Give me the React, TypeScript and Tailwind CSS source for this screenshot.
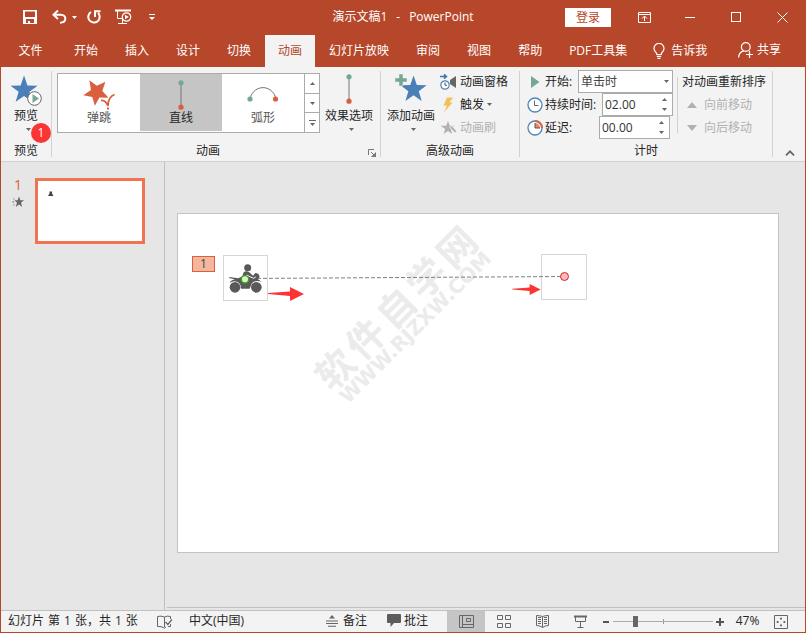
import clsx from 'clsx';
import React from 'react';

const STAR = '12,0.5 14.9,8.9 23.6,9.1 16.6,14.4 19.2,22.9 12,17.9 4.8,22.9 7.4,14.4 0.4,9.1 9.1,8.9';

const tabs = ['开始', '插入', '设计', '切换', '动画', '幻灯片放映', '审阅', '视图', '帮助', 'PDF工具集'];

const Caret: React.FC<{ up?: boolean; className?: string }> = ({ up, className }) => (
    <svg viewBox="0 0 5 3" className={clsx('h-[3px] w-[5px] shrink-0', className)} fill="currentColor">
        <path d={up ? 'M0 3 L2.5 0 L5 3Z' : 'M0 0 H5 L2.5 3Z'} />
    </svg>
);

const Group: React.FC<{ label: string; className?: string; labelClass?: string; launcher?: boolean; children: React.ReactNode }> = ({
    label,
    className,
    labelClass,
    launcher,
    children,
}) => (
    <section aria-label={label} className={clsx('relative flex shrink-0 flex-col border-r border-[#d2d2d2]', className)}>
        <div className="flex flex-1">{children}</div>
        <div className={clsx('text-center leading-3', labelClass)}>{label}</div>
        {launcher && (
            <button aria-label="更多选项" className="absolute right-[4px] bottom-0 h-2 w-2 text-[#777]">
                <svg viewBox="0 0 8 8" className="h-2 w-2" fill="none" stroke="currentColor">
                    <path d="M0.5 6 V0.5 H6 M3 3 L6.5 6.5 M7.5 3.5 V7.5 H3.5" />
                    <path d="M4 7.5 H7.5 V4Z" fill="currentColor" />
                </svg>
            </button>
        )}
    </section>
);

const BigButton: React.FC<{ label: string; className?: string; children: React.ReactNode }> = ({ label, className, children }) => (
    <button className={clsx('flex flex-col items-center pt-[3px]', className)}>
        {children}
        <span className="mt-[2px] leading-4 whitespace-nowrap">{label}</span>
        <Caret className="mt-1 ml-1 text-[#666]" />
    </button>
);

const LineIcon = () => (
    <svg viewBox="0 0 8 30" className="h-[30px] w-2">
        <path d="M4 3 V27" stroke="#777" />
        <circle cx="4" cy="2.8" r="2.6" fill="#74a893" />
        <circle cx="4" cy="27.2" r="2.6" fill="#d9603e" />
    </svg>
);

const BounceIcon = () => (
    <svg viewBox="0 0 32 31" className="h-[31px] w-8">
        <polygon
            points="6.3,1.2 13.9,6.8 22.4,2.8 19.3,12 25.6,18.8 16.4,18.6 11.9,26.8 9.3,18 0.3,16.2 8,11"
            fill="#d9603e"
        />
        <path d="M18 21.5 Q22.5 21 25 27 Q25 18 31.5 15.5" fill="none" stroke="#fff" strokeWidth="4" />
        <path d="M18 21.5 Q22.5 21 25 27 Q25 18 31.5 15.5" fill="none" stroke="#d9603e" strokeWidth="1.8" />
        <path d="M24 28.5 H26 V30.5 H24Z" fill="#d9603e" />
    </svg>
);

const ArcIcon = () => (
    <svg viewBox="0 0 32 16" className="h-4 w-8">
        <path d="M3 12.5 C7 -2 25 -2 29 12.5" fill="none" stroke="#777" />
        <circle cx="3" cy="13" r="2.6" fill="#74a893" />
        <circle cx="28.5" cy="13" r="2.6" fill="#d9603e" />
    </svg>
);

const effects = [
    { name: '弹跳', icon: <BounceIcon />, active: false },
    { name: '直线', icon: <LineIcon />, active: true },
    { name: '弧形', icon: <ArcIcon />, active: false },
];

const ClockIcon: React.FC<{ delay?: boolean }> = ({ delay }) => (
    <svg viewBox="0 0 16 16" className="h-4 w-4 shrink-0" fill="none">
        <circle cx="8" cy="8" r="7" fill="#fff" stroke="#4f86b8" strokeWidth="1.3" />
        {delay ? (
            <>
                <path d="M8 8 V3 A5 5 0 0 1 13 8Z" fill="#e88872" />
                <path d="M8 1 A7 7 0 0 1 15 8" stroke="#d9603e" strokeWidth="2" />
                <path d="M8 3 V8 H13" stroke="#555" />
            </>
        ) : (
            <path d="M7.5 3.5 V8.5 H11.5" stroke="#666" />
        )}
    </svg>
);

const Spinner: React.FC<{ id: string; value: string }> = ({ id, value }) => (
    <div className="flex h-[23px] w-[71px] border border-[#ababab] bg-white">
        <input id={id} defaultValue={value} className="w-0 flex-1 pl-[2px] text-[#333] outline-none" />
        <div className="flex w-4 flex-col text-[#666]">
            <button aria-label="增加" className="flex flex-1 items-center justify-center">
                <Caret up />
            </button>
            <button aria-label="减少" className="flex flex-1 items-center justify-center">
                <Caret />
            </button>
        </div>
    </div>
);

const TitleBar = () => (
    <header className="grid h-[33px] grid-cols-[1fr_auto_1fr] items-center pb-px text-white">
        <div className="flex items-center pl-[22px]">
            <button aria-label="保存">
                <svg viewBox="0 0 14 14" className="h-[14px] w-[14px]">
                    <path d="M0 0 H14 V14 H0Z M2 1.5 V7 H12 V1.5Z M3 9 V13 H5 V11 H7 V13 H11 V9Z" fill="currentColor" fillRule="evenodd" />
                </svg>
            </button>
            <button aria-label="撤消" className="ml-[15px]">
                <svg viewBox="0 0 15 14" className="h-[14px] w-[15px]" fill="none" stroke="currentColor" strokeWidth="2">
                    <path d="M6 0.5 L1.5 4.7 L6 9" />
                    <path d="M2 4.7 H8.5 C15 5 15 12.5 8 12.8" />
                </svg>
            </button>
            <Caret className="ml-[5px]" />
            <button aria-label="重复" className="ml-[10px]">
                <svg viewBox="0 0 14 14" className="h-[14px] w-[14px]" fill="none" stroke="currentColor" strokeWidth="2">
                    <path d="M4 2 A5.7 5.7 0 1 0 11 2.8" />
                    <path d="M8 7 V1.2 H13.5" />
                </svg>
            </button>
            <button aria-label="从头开始" className="ml-[14px]">
                <svg viewBox="0 0 17 16" className="h-4 w-[17px]" fill="none" stroke="currentColor">
                    <path d="M0 1.5 H16" strokeWidth="2" />
                    <path d="M2.5 2 V9.5 H7 M7.5 10 V14.5 M3 14.5 H12" />
                    <circle cx="11.5" cy="8" r="4.2" fill="#b7472a" strokeWidth="1.2" />
                    <path d="M10 5.7 V10.3 L13.8 8Z" fill="currentColor" stroke="none" />
                </svg>
            </button>
            <button aria-label="自定义快速访问工具栏" className="ml-[17px]">
                <svg viewBox="0 0 6 6" className="h-[6px] w-[6px]" fill="currentColor">
                    <path d="M0 0 H6 V1 H0Z M0 3 H6 L3 6Z" />
                </svg>
            </button>
        </div>
        <h1 className="flex gap-[9px]">
            <span>演示文稿1</span>
            <span>-</span>
            <span>PowerPoint</span>
        </h1>
        <div className="flex items-center justify-end">
            <button className="mr-[10px] h-[19px] w-[46px] bg-white leading-[19px] text-[#b7472a]">登录</button>
            <button aria-label="功能区显示选项" className="flex w-[46px] justify-center">
                <svg viewBox="0 0 13 11" className="h-[11px] w-[13px]" fill="none" stroke="currentColor">
                    <path d="M0.5 0.5 H12.5 V10.5 H0.5Z M0.5 2.5 H12.5 M6.5 9 V4.5 M4 6.5 L6.5 4 L9 6.5" />
                </svg>
            </button>
            <button aria-label="最小化" className="flex w-[46px] justify-center">
                <span className="h-px w-[10px] bg-white" />
            </button>
            <button aria-label="最大化" className="flex w-[46px] justify-center">
                <span className="h-[10px] w-[10px] border border-white" />
            </button>
            <button aria-label="关闭" className="flex w-[46px] justify-center">
                <svg viewBox="0 0 11 11" className="h-[11px] w-[11px]" stroke="currentColor">
                    <path d="M0.5 0.5 L10.5 10.5 M10.5 0.5 L0.5 10.5" />
                </svg>
            </button>
        </div>
    </header>
);

const TabBar = () => (
    <nav className="flex h-[33px] items-end gap-px whitespace-nowrap text-white">
        <button className="h-8 w-[59px]">文件</button>
        {tabs.map((tab) => (
            <button key={tab} className={clsx('h-8 px-[13px]', tab === '动画' && 'bg-[#f3f3f3] text-[#b7472a]')}>
                {tab}
            </button>
        ))}
        <button className="ml-3 flex h-8 items-center gap-[6px]">
            <svg viewBox="0 0 12 16" className="h-4 w-3" fill="none" stroke="currentColor" strokeWidth="1.2">
                <path d="M3.8 11.5 C3.8 9 1 8.5 1 5.4 A5 5 0 0 1 11 5.4 C11 8.5 8.2 9 8.2 11.5Z M3.8 13.4 H8.2 M4.5 15.3 H7.5" />
            </svg>
            告诉我
        </button>
        <button className="mr-6 ml-auto flex h-8 items-center gap-1 pb-[2px]">
            <svg viewBox="0 0 15 16" className="h-4 w-[15px]" fill="none" stroke="currentColor" strokeWidth="1.2">
                <circle cx="7.8" cy="5" r="4.4" />
                <path d="M0.6 15.5 C0.8 11.5 3 9.3 6 8.8 M11.5 9 V16 M8 12.5 H15" />
            </svg>
            共享
        </button>
    </nav>
);

const Ribbon = () => (
    <div className="flex h-[95px] border-b border-[#d0d0d0] bg-[#f3f3f3] py-1 text-[#262626]">
        <Group label="预览" className="w-[51px]">
            <BigButton label="预览" className="w-full">
                <svg viewBox="0 0 32 32" className="h-8 w-8">
                    <g transform="translate(0 1) scale(1.17)">
                        <polygon points={STAR} fill="#4a7fb8" />
                    </g>
                    <circle cx="24.5" cy="24.5" r="6.8" fill="#fff" stroke="#666" />
                    <path d="M22.5 20 V29 L29 24.5Z" fill="#74a893" />
                </svg>
            </BigButton>
            <span className="absolute top-[52px] left-[30px] flex h-5 w-5 items-center justify-center rounded-full bg-[#fb3434] text-white">1</span>
        </Group>

        <Group label="动画" className="w-[329px]" labelClass="pr-4" launcher>
            <div className="mt-[2px] ml-[5px] flex h-[60px] border border-[#ababab] bg-white">
                {effects.map((effect) => (
                    <button
                        key={effect.name}
                        className={clsx('mb-px flex w-[82px] flex-col items-center', effect.active ? 'bg-[#c5c5c5]' : 'text-[#555]')}
                    >
                        <span className="flex h-9 items-end justify-center">
                            <span className={effect.name === '弧形' ? 'pb-2' : ''}>{effect.icon}</span>
                        </span>
                        <span className="leading-4">{effect.name}</span>
                    </button>
                ))}
                <div className="flex w-[15px] flex-col divide-y divide-[#ababab] border-l border-[#ababab] text-[#666]">
                    <button aria-label="上一行" className="flex flex-1 items-center justify-center">
                        <Caret up />
                    </button>
                    <button aria-label="下一行" className="flex flex-1 items-center justify-center">
                        <Caret />
                    </button>
                    <button aria-label="其他" className="flex flex-1 flex-col items-center justify-center gap-[2px]">
                        <span className="h-px w-[7px] bg-[#666]" />
                        <Caret />
                    </button>
                </div>
            </div>
            <BigButton label="效果选项" className="w-[58px]">
                <span className="flex h-8 items-start">
                    <LineIcon />
                </span>
            </BigButton>
        </Group>

        <Group label="高级动画" className="w-[139px]">
            <BigButton label="添加动画" className="ml-[5px] w-[50px]">
                <svg viewBox="0 0 32 32" className="h-8 w-8">
                    <g transform="translate(5 1) scale(1.13)">
                        <polygon points={STAR} fill="#4a7fb8" />
                    </g>
                    <path d="M4 0 H8 V4 H12 V8 H8 V12 H4 V8 H0 V4 H4Z" fill="#74a893" stroke="#f3f3f3" strokeWidth="0.5" />
                </svg>
            </BigButton>
            <div className="-mt-px ml-1 flex flex-col whitespace-nowrap">
                <button className="flex h-[23px] items-center gap-[3px]">
                    <svg viewBox="0 0 17 16" className="h-4 w-[17px]" fill="none">
                        <path d="M0 2.5 H6 M4 0.3 L6.4 2.5 L4 4.7" stroke="#4177ad" strokeWidth="1.6" />
                        <circle cx="5" cy="11" r="4.2" fill="#fff" stroke="#4f86b8" strokeWidth="1.2" />
                        <path d="M5 8.5 V11.3 H7" stroke="#555" />
                        <path d="M10 6 L16 2 V14 L10 10Z" fill="#666" />
                    </svg>
                    动画窗格
                </button>
                <button className="flex h-[23px] items-center gap-[3px]">
                    <svg viewBox="0 0 17 16" className="h-4 w-[17px]">
                        <path d="M7 0.5 H13 L9.5 5.5 H12.5 L4 15.5 L7 8.5 H3.5Z" fill="#f0c05a" />
                    </svg>
                    触发
                    <Caret className="text-[#666]" />
                </button>
                <button disabled className="flex h-[23px] items-center gap-[3px] text-[#b1b1b1]">
                    <svg viewBox="0 0 17 16" className="h-4 w-[17px]" fill="currentColor">
                        <path d="M8 1 L9.8 5.8 H14.5 L10.8 8.8 L12 14 L8 11 L3.5 14 L5.2 9 L0.5 5.8 H6.2Z" />
                        <path d="M9.5 7.5 L12 6 L16.8 11.2 L15.2 13Z" stroke="#f3f3f3" strokeWidth="0.8" />
                    </svg>
                    动画刷
                </button>
            </div>
        </Group>

        <Group label="计时" className="w-[253px]">
            <div className="-mt-px ml-[7px] flex w-[146px] flex-col whitespace-nowrap">
                <div className="flex h-[23px] items-center">
                    <svg viewBox="0 0 16 16" className="h-4 w-4">
                        <path d="M4 2 V14 L12.5 8Z" fill="#74a893" />
                    </svg>
                    <label htmlFor="start" className="ml-[2px]">
                        开始:
                    </label>
                    <div className="relative ml-auto">
                        <select
                            id="start"
                            defaultValue="单击时"
                            className="block h-[23px] w-[95px] appearance-none border border-[#ababab] bg-white pl-[2px] text-[#444] outline-none"
                        >
                            <option>单击时</option>
                            <option>与上一动画同时</option>
                            <option>上一动画之后</option>
                        </select>
                        <Caret className="pointer-events-none absolute top-[10px] right-1 text-[#666]" />
                    </div>
                </div>
                <div className="flex h-[23px] items-center">
                    <ClockIcon />
                    <label htmlFor="duration" className="mr-auto ml-[2px]">
                        持续时间:
                    </label>
                    <Spinner id="duration" value="02.00" />
                </div>
                <div className="flex h-[23px] items-center pr-[3px]">
                    <ClockIcon delay />
                    <label htmlFor="delay" className="mr-auto ml-[2px]">
                        延迟:
                    </label>
                    <Spinner id="delay" value="00.00" />
                </div>
            </div>
            <div className="my-[6px] ml-1 h-14 w-px bg-[#d2d2d2]" />
            <div className="-mt-px ml-1 flex flex-col whitespace-nowrap">
                <div className="h-[23px] leading-[23px]">对动画重新排序</div>
                <button disabled className="flex h-[23px] items-center pl-[5px] text-[#b1b1b1]">
                    <svg viewBox="0 0 10 6" className="mr-[7px] h-[6px] w-[10px]" fill="currentColor">
                        <path d="M0 6 L5 0 L10 6Z" />
                    </svg>
                    向前移动
                </button>
                <button disabled className="flex h-[23px] items-center pl-[5px] text-[#b1b1b1]">
                    <svg viewBox="0 0 10 6" className="mr-[7px] h-[6px] w-[10px]" fill="currentColor">
                        <path d="M0 0 H10 L5 6Z" />
                    </svg>
                    向后移动
                </button>
            </div>
        </Group>

        <button aria-label="折叠功能区" className="mr-[10px] ml-auto self-end pb-px text-[#666]">
            <svg viewBox="0 0 10 6" className="h-[6px] w-[10px]" fill="none" stroke="currentColor" strokeWidth="1.8">
                <path d="M1 5.3 L5 1.3 L9 5.3" />
            </svg>
        </button>
    </div>
);

const Motorbike = () => (
    <svg viewBox="0 0 135 138" className="h-full w-full" fill="#595959">
        <circle cx="36" cy="97" r="16" />
        <circle cx="100" cy="97" r="16" />
        <circle cx="74" cy="38" r="10.5" />
        <path d="M18 66 L46 70 L58 64 L62 52 Q68 46 78 51 L90 62 L97 54 Q108 55 110 65 L105 73 L116 80 Q98 74 87 84 L80 101 H54 Q54 84 42 80 Q30 76 20 84 Q24 75 36 73 L20 70Z" />
        <path d="M70 60 L92 70 L98 66" fill="none" stroke="#fff" strokeWidth="3" />
        <circle cx="66" cy="73" r="11" fill="#d9f7c0" stroke="#3f9f22" strokeWidth="4" />
    </svg>
);

const RedArrow: React.FC<{ className: string }> = ({ className }) => (
    <svg viewBox="0 0 36 14" className={clsx('absolute', className)} fill="#fb3434">
        <path d="M0 6 L22 4.5 V0 L36 7 L22 14 V9 L0 7Z" />
    </svg>
);

const Slide = () => (
    <div className="relative aspect-[602/340] w-full overflow-hidden border border-[#c3c3c3] bg-white">
        <div className="absolute top-[74px] left-[106px] w-60 -rotate-45 font-bold text-[#ebebeb]">
            <div className="flex justify-center gap-[5px] text-[38px] leading-8">
                {[...'软件自学网'].map((char) => (
                    <span key={char}>{char}</span>
                ))}
            </div>
            <div className="text-center font-[family-name:DejaVu_Sans] text-[20px] leading-6">WWW.RJZXW.COM</div>
        </div>
        <div className="absolute top-[42px] left-[14px] h-4 w-[23px] border border-[#d9603e] bg-[#f4b79d] text-center leading-[14px] text-[#444]">1</div>
        <div className="absolute top-[41px] left-[45px] h-[46px] w-[45px] border border-[#d6d6d6]" />
        <div className="absolute top-10 left-[363px] h-[46px] w-[46px] border border-[#d6d6d6]" />
        <svg viewBox="0 0 320 4" className="absolute top-[61px] left-[67px] h-1 w-80">
            <path d="M0 3.5 L320 1.5" stroke="#808080" strokeDasharray="4 2" />
        </svg>
        <div className="absolute top-[41px] left-[45px] h-[46px] w-[45px]">
            <Motorbike />
        </div>
        <div className="absolute top-[58px] left-[382px] h-[9px] w-[9px] rounded-full border border-[#d8262c] bg-[#f7b9bb]" />
        <RedArrow className="top-[73px] left-[90px] h-[14px] w-9" />
        <RedArrow className="top-[70px] left-[334px] h-[11px] w-[29px]" />
    </div>
);

const Workspace = () => (
    <main className="flex flex-1 bg-[#e6e6e6]">
        <aside className="flex w-[164px] shrink-0 items-start border-r border-[#c0c0c0] pt-4">
            <div className="flex w-[34px] flex-col items-center text-[#d9603e]">
                <span className="text-sm leading-[14px]">1</span>
                <svg viewBox="0 0 12 12" className="mt-1 h-3 w-3" fill="#666">
                    <path d="M7 0.5 L8.3 4.3 H12 L9 6.8 L10.2 11 L7 8.5 L3.8 11 L5 6.8 L2.3 4.3 H5.7Z M1.5 2.5 H2.5 V3.5 H1.5Z M0.5 5.5 H2 V6.5 H0.5Z M1.5 8.5 H2.5 V9.5 H1.5Z" />
                </svg>
            </div>
            <button aria-label="幻灯片 1" className="h-[66px] w-[110px] border-3 border-[#f07352] bg-white">
                <svg viewBox="0 0 104 60" className="h-[60px] w-[104px]" fill="#444">
                    <path d="M10 15 L11.5 12.5 V10.5 H14 V12.5 L15.5 15Z" />
                </svg>
            </button>
        </aside>
        <div className="flex flex-1 flex-col pl-[2px]">
            <div className="flex flex-1 items-center pr-[26px] pb-1 pl-[10px]">
                <Slide />
            </div>
            <div className="h-[3px] border-t border-[#c0c0c0]" />
        </div>
    </main>
);

const StatusBar = () => (
    <footer className="flex h-[22px] items-center border-t border-[#c0c0c0] bg-[#f3f3f3] leading-[18px] whitespace-nowrap text-[#262626]">
        <div className="flex w-[156px] gap-1 pb-[2px] pl-[7px]">
            <span>幻灯片</span>
            <span>第</span>
            <span>1</span>
            <span>张，共</span>
            <span>1</span>
            <span>张</span>
        </div>
        <button aria-label="拼写检查">
            <svg viewBox="0 0 16 14" className="h-[14px] w-4" fill="none" stroke="#666">
                <path d="M7.5 12 V2 Q4 0.5 0.5 1.5 V11.5 Q4 11 7.5 13 L9 12 M7.5 2 Q10 0.5 13.5 1.5 V4 M13.5 9 V11.5 H11" />
                <path d="M8.5 7 L10.8 9.5 L15 4.5" strokeWidth="1.3" />
            </svg>
        </button>
        <button className="ml-4 pb-[2px]">中文(中国)</button>
        <div className="ml-auto flex h-full items-center">
            <button className="flex items-center gap-[5px] pb-[2px]">
                <svg viewBox="0 0 12 12" className="h-3 w-3" fill="#666">
                    <path d="M6 0 L9 3.5 H3Z M0 5.5 H12 V6.5 H0Z M0 8 H12 V9 H0Z M2 10.7 H10 V11.7 H2Z" />
                </svg>
                备注
            </button>
            <button className="ml-5 flex items-center gap-[3px] pb-[2px]">
                <svg viewBox="0 0 14 13" className="h-[13px] w-[14px]" fill="#5c5c5c">
                    <path d="M1 0 H13 Q14 0 14 1 V8 Q14 9 13 9 H7 L3.5 13 V9 H1 Q0 9 0 8 V1 Q0 0 1 0Z" />
                </svg>
                批注
            </button>
            <button aria-label="普通视图" className="ml-[19px] flex h-full w-[38px] items-center justify-center bg-[#c5c5c5]">
                <svg viewBox="0 0 15 13" className="h-[13px] w-[15px]" fill="none" stroke="#666">
                    <path d="M0.5 0.5 H14.5 V12.5 H0.5Z M3.5 0.5 V12.5 M3.5 9.5 H14.5 M7.5 3.5 H11.5 V6.5 H7.5Z" />
                </svg>
            </button>
            <button aria-label="幻灯片浏览" className="flex w-[38px] justify-center">
                <svg viewBox="0 0 14 13" className="h-[13px] w-[14px]" fill="none" stroke="#666">
                    <path d="M0.5 0.5 H5.5 V4.5 H0.5Z M8.5 0.5 H13.5 V4.5 H8.5Z M0.5 8.5 H5.5 V12.5 H0.5Z M8.5 8.5 H13.5 V12.5 H8.5Z" />
                </svg>
            </button>
            <button aria-label="阅读视图" className="flex w-[38px] justify-center">
                <svg viewBox="0 0 13 13" className="h-[13px] w-[13px]" fill="none" stroke="#666">
                    <path d="M6.5 12.5 V1.5 Q4 0.5 0.5 0.5 V10.5 Q4 10.5 6.5 12.5 Q9 10.5 12.5 10.5 V0.5 Q9 0.5 6.5 1.5" />
                    <path d="M2 2.5 H5 M2 4.5 H5 M2 6.5 H5 M2 8.5 H5 M8 2.5 H11 M8 4.5 H11 M8 6.5 H11 M8 8.5 H11" />
                </svg>
            </button>
            <button aria-label="幻灯片放映" className="flex w-[38px] justify-center">
                <svg viewBox="0 0 13 13" className="h-[13px] w-[13px]" fill="none" stroke="#666">
                    <path d="M0 1.5 H13" strokeWidth="2" />
                    <path d="M1.5 1 V6.5 H11.5 V1 M6.5 6.5 V12 M3.5 12.5 H9.5" />
                </svg>
            </button>
            <button aria-label="缩小" className="ml-1 flex h-4 w-2 items-center">
                <span className="h-[2px] w-[6px] bg-[#555]" />
            </button>
            <div className="relative ml-[2px] flex items-center">
                <span className="absolute left-1/2 h-[5px] w-px bg-[#999]" />
                <input
                    type="range"
                    aria-label="缩放"
                    min={0}
                    max={100}
                    defaultValue={21}
                    className="relative h-[11px] w-[100px] appearance-none bg-transparent outline-none [&::-webkit-slider-runnable-track]:h-px [&::-webkit-slider-runnable-track]:bg-[#ababab] [&::-webkit-slider-thumb]:-mt-[5px] [&::-webkit-slider-thumb]:h-[11px] [&::-webkit-slider-thumb]:w-[5px] [&::-webkit-slider-thumb]:appearance-none [&::-webkit-slider-thumb]:bg-[#666]"
                />
            </div>
            <button aria-label="放大" className="ml-[3px]">
                <svg viewBox="0 0 8 8" className="h-2 w-2" stroke="#555" strokeWidth="2">
                    <path d="M0 4 H8 M4 0 V8" />
                </svg>
            </button>
            <button className="ml-[11px] w-[25px] pb-[2px]">47%</button>
            <button aria-label="使幻灯片适应当前窗口" className="mr-[17px] ml-[14px]">
                <svg viewBox="0 0 14 14" className="h-[14px] w-[14px]" fill="none" stroke="#666">
                    <path d="M0.5 0.5 H13.5 V13.5 H0.5Z" />
                    <path d="M7 2.5 V5 M7 9 V11.5 M2.5 7 H5 M9 7 H11.5" />
                    <path d="M6 3.5 H8 M6 10.5 H8 M3.5 6 V8 M10.5 6 V8" />
                </svg>
            </button>
        </div>
    </footer>
);

const App: React.FC = () => {
    return (
        <div className="flex min-h-screen flex-col border border-[#b7472a] bg-[#b7472a] font-['Open_Sans','Noto_Sans_CJK_SC',sans-serif] text-xs">
            <TitleBar />
            <TabBar />
            <Ribbon />
            <Workspace />
            <StatusBar />
        </div>
    );
};

export default App;
